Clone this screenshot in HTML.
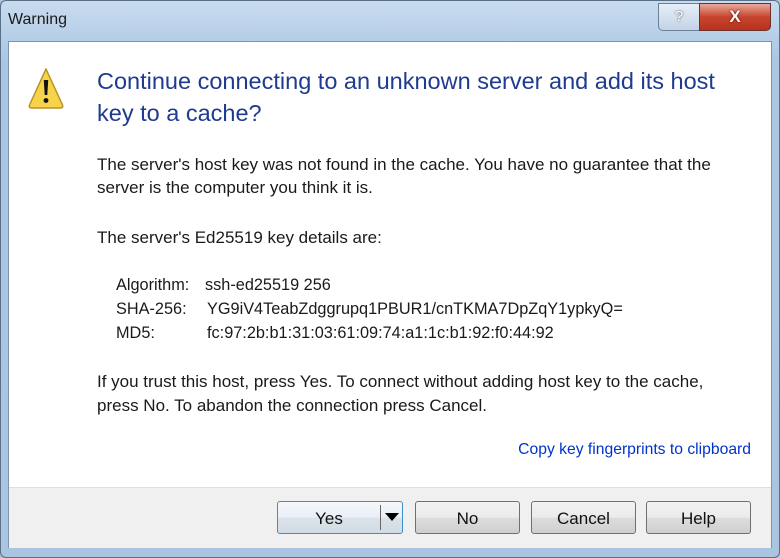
<!DOCTYPE html>
<html><head><meta charset="utf-8"><style>
body{margin:0;width:780px;height:558px;overflow:hidden;background:#a9c5e2;font-family:"Liberation Sans",sans-serif;position:relative}
.t{position:absolute;white-space:nowrap;font-size:17px;color:#1a1a1a}
.k{font-size:16.3px}
.frame{position:absolute;left:0;top:0;width:778px;height:556px;border:1px solid #5b6f86;border-radius:6px;background:linear-gradient(#c9dcef,#aac6e3 60px,#a9c5e2)}
.client{position:absolute;left:8px;top:41px;width:762px;height:505px;background:#fff;border:1px solid #7f93ab}
.foot{position:absolute;left:9px;top:487px;width:762px;height:60px;background:#f0f0f0;border-top:1px solid #dfdfdf}
.btn{position:absolute;top:501px;height:31px;border:1px solid #707070;border-radius:3px;background:linear-gradient(#f2f2f2,#ebebeb 50%,#dddddd 51%,#cfcfcf);font-size:17px;text-align:center;line-height:33px;color:#111}
</style></head><body>
<div class="frame"></div>
<div class="t" style="left:8px;top:11px;font-size:16px">Warning</div>
<div style="position:absolute;left:658px;top:3px;width:40px;height:26px;border:1px solid #6b7f96;border-radius:0 0 0 5px;background:linear-gradient(#e6eef7,#c3d3e6);text-align:center;font-size:15px;line-height:25px;color:#fff;text-shadow:0 0 2px #334">?</div>
<div style="position:absolute;left:699px;top:3px;width:70px;height:26px;border:1px solid #6b3030;border-radius:0 0 5px 0;background:linear-gradient(#e9a99a,#c7452f 50%,#b8321c);text-align:center;font-size:17px;font-weight:bold;line-height:25px;color:#fff;text-shadow:0 0 2px #400">X</div>
<div class="client"></div>
<div class="foot"></div>
<svg style="position:absolute;left:28px;top:68px" width="36" height="42" viewBox="0 0 36 42"><path d="M18 1 L34.5 37 Q35.5 40 32 40 L4 40 Q0.5 40 1.5 37 Z" fill="#f7d34a" stroke="#b8912a" stroke-width="1.5"/><path d="M15.8 12 h4.4 l-0.9 15 h-2.6z" fill="#111"/><circle cx="18" cy="32.5" r="2.4" fill="#111"/></svg>
<div class="t" style="left:97px;top:68px;font-size:23.5px;color:#1f3b8f">Continue connecting to an unknown server and add its host</div>
<div class="t" style="left:97px;top:100px;font-size:23.5px;color:#1f3b8f">key to a cache?</div>
<div class="t" style="left:97px;top:155px">The server's host key was not found in the cache. You have no guarantee that the</div>
<div class="t" style="left:97px;top:178px">server is the computer you think it is.</div>
<div class="t" style="left:97px;top:228px">The server's Ed25519 key details are:</div>
<div class="t k" style="left:116px;top:276px">Algorithm:</div><div class="t k" style="left:205px;top:276px">ssh-ed25519 256</div>
<div class="t k" style="left:116px;top:300px">SHA-256:</div><div class="t k" style="left:207px;top:300px">YG9iV4TeabZdggrupq1PBUR1/cnTKMA7DpZqY1ypkyQ=</div>
<div class="t k" style="left:116px;top:324px">MD5:</div><div class="t k" style="left:207px;top:324px">fc:97:2b:b1:31:03:61:09:74:a1:1c:b1:92:f0:44:92</div>
<div class="t" style="left:97px;top:372px">If you trust this host, press Yes. To connect without adding host key to the cache,</div>
<div class="t" style="left:97px;top:396px">press No. To abandon the connection press Cancel.</div>
<div class="t" style="right:29px;top:441px;color:#0033cc;font-size:15.7px">Copy key fingerprints to clipboard</div>
<div class="btn" style="left:277px;width:124px;border-color:#3c8fc9;background:linear-gradient(#f4f8fb,#e9eff5 50%,#dbe3ea 51%,#d2dbe3)"><span style="position:absolute;left:0;width:102px">Yes</span><span style="position:absolute;left:102px;top:3px;height:25px;border-left:1px solid #666"></span><svg style="position:absolute;left:107px;top:11px" width="14" height="8"><path d="M0 0 H14 L7 8Z" fill="#000"/></svg></div>
<div class="btn" style="left:415px;width:103px">No</div>
<div class="btn" style="left:531px;width:103px">Cancel</div>
<div class="btn" style="left:646px;width:103px">Help</div>
</body></html>
